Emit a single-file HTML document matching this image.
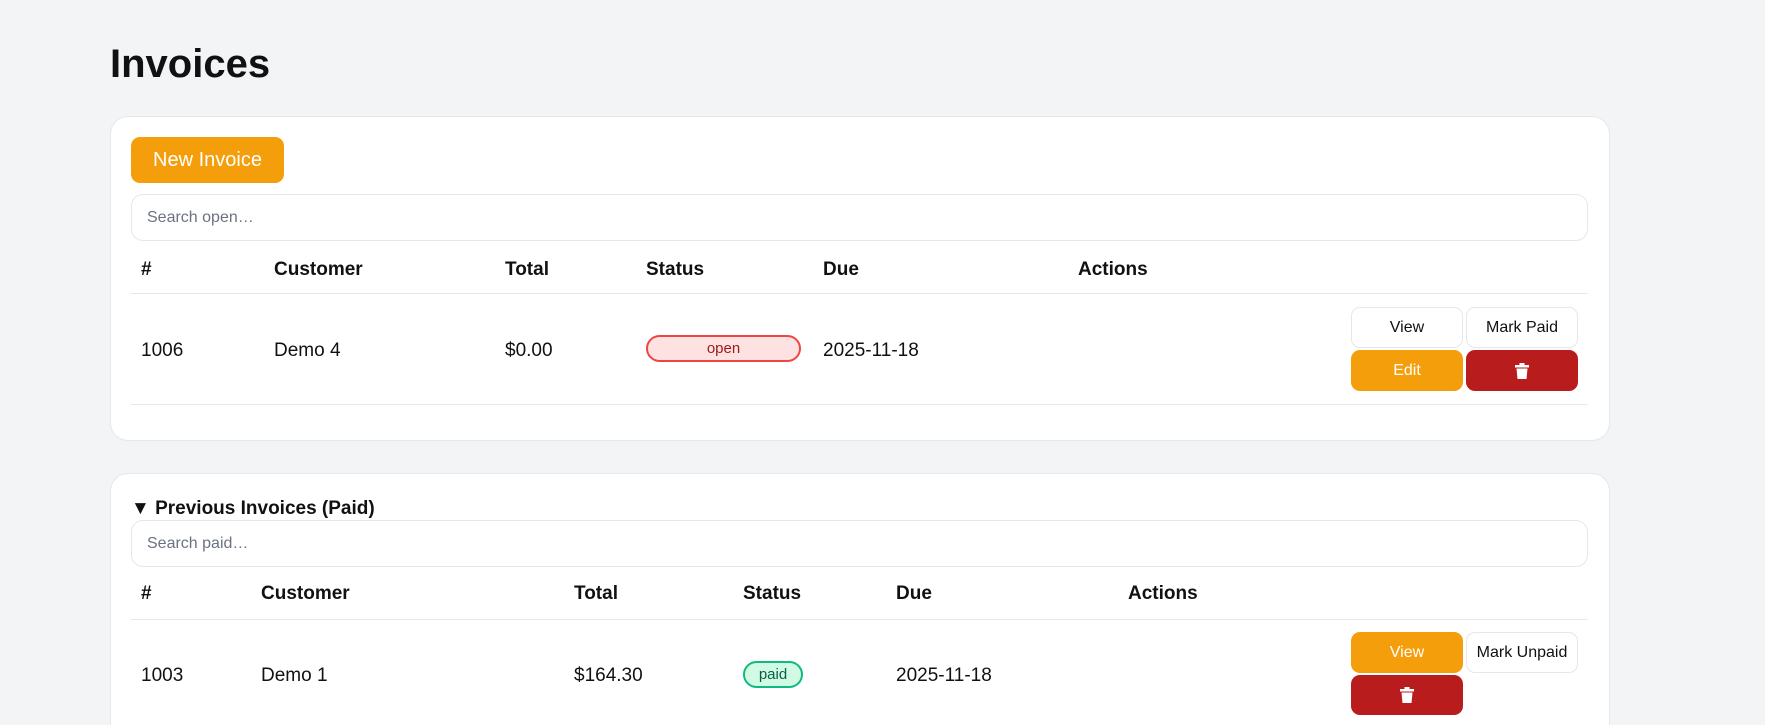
<!DOCTYPE html>
<html style="width:1765px;height:725px;overflow:hidden"><head><meta charset="utf-8"><style>
*{box-sizing:border-box;margin:0;padding:0}
body{width:1765px;height:725px;overflow:hidden;background:#f3f4f6;font-family:"Liberation Sans",sans-serif;color:#111;position:relative}
.a{position:absolute}
h1{position:absolute;left:110px;top:42px;font-size:40px;font-weight:bold}
.card{position:absolute;left:110px;width:1500px;background:#fff;border:1px solid #e5e7eb;border-radius:18px}
.btn{position:absolute;height:41px;border-radius:9px;font-family:"Liberation Sans",sans-serif;font-size:16px;display:flex;align-items:center;justify-content:center;width:112px}
.w{background:#fff;border:1px solid #e5e7eb;color:#111}
.o{background:#f59e0b;color:#fff}
.r{background:#b91c1c;color:#fff}
.search{position:absolute;left:131px;width:1457px;height:47px;border:1px solid #e5e7eb;border-radius:12px;font-size:16px;color:#6b7280;padding:14px 15px}
.th{position:absolute;font-weight:bold;font-size:19px}
.td{position:absolute;font-size:19px}
.line{position:absolute;left:131px;width:1457px;height:1px;background:#e5e7eb}
.pill{position:absolute;border-radius:14px;font-size:15px;display:flex;align-items:center;justify-content:center}
</style></head><body>
<h1>Invoices</h1>
<div class="card" style="top:116px;height:325px"></div>
<div class="btn o" style="left:131px;top:137px;width:153px;height:46px;font-size:20px">New Invoice</div>
<div class="search" style="top:194px">Search open…</div>
<div class="th" style="left:141px;top:259px">#</div>
<div class="th" style="left:274px;top:259px">Customer</div>
<div class="th" style="left:505px;top:259px">Total</div>
<div class="th" style="left:646px;top:259px">Status</div>
<div class="th" style="left:823px;top:259px">Due</div>
<div class="th" style="left:1078px;top:259px">Actions</div>
<div class="line" style="top:293px"></div>
<div class="td" style="left:141px;top:340px">1006</div>
<div class="td" style="left:274px;top:340px">Demo 4</div>
<div class="td" style="left:505px;top:340px">$0.00</div>
<div class="pill" style="left:646px;top:335px;width:155px;height:27px;background:#fee2e2;border:2px solid #ef4444;color:#991b1b">open</div>
<div class="td" style="left:823px;top:340px">2025-11-18</div>
<div class="btn w" style="left:1351px;top:307px">View</div>
<div class="btn w" style="left:1466px;top:307px">Mark Paid</div>
<div class="btn o" style="left:1351px;top:350px">Edit</div>
<div class="btn r" style="left:1466px;top:350px"><svg width="14" height="16" viewBox="0 0 14 16"><rect x="0" y="2" width="14" height="2.5" fill="#fff"/><rect x="4.5" y="0" width="5" height="3" fill="#fff"/><path d="M1.5 5.5h11l-1 10.5h-9z" fill="#fff"/></svg></div>
<div class="line" style="top:404px"></div>

<div class="card" style="top:473px;height:252px;border-bottom:none;border-radius:18px 18px 0 0"></div>
<div class="a" style="left:131px;top:498px;font-size:19px;font-weight:bold">▼ Previous Invoices (Paid)</div>
<div class="search" style="top:520px">Search paid…</div>
<div class="th" style="left:141px;top:583px">#</div>
<div class="th" style="left:261px;top:583px">Customer</div>
<div class="th" style="left:574px;top:583px">Total</div>
<div class="th" style="left:743px;top:583px">Status</div>
<div class="th" style="left:896px;top:583px">Due</div>
<div class="th" style="left:1128px;top:583px">Actions</div>
<div class="line" style="top:619px"></div>
<div class="td" style="left:141px;top:665px">1003</div>
<div class="td" style="left:261px;top:665px">Demo 1</div>
<div class="td" style="left:574px;top:665px">$164.30</div>
<div class="pill" style="left:743px;top:661px;width:60px;height:27px;background:#d1fae5;border:2px solid #10b981;color:#065f46">paid</div>
<div class="td" style="left:896px;top:665px">2025-11-18</div>
<div class="btn o" style="left:1351px;top:632px">View</div>
<div class="btn w" style="left:1466px;top:632px">Mark Unpaid</div>
<div class="btn r" style="left:1351px;top:675px;height:40px"><svg width="14" height="16" viewBox="0 0 14 16"><rect x="0" y="2" width="14" height="2.5" fill="#fff"/><rect x="4.5" y="0" width="5" height="3" fill="#fff"/><path d="M1.5 5.5h11l-1 10.5h-9z" fill="#fff"/></svg></div>
</body></html>
